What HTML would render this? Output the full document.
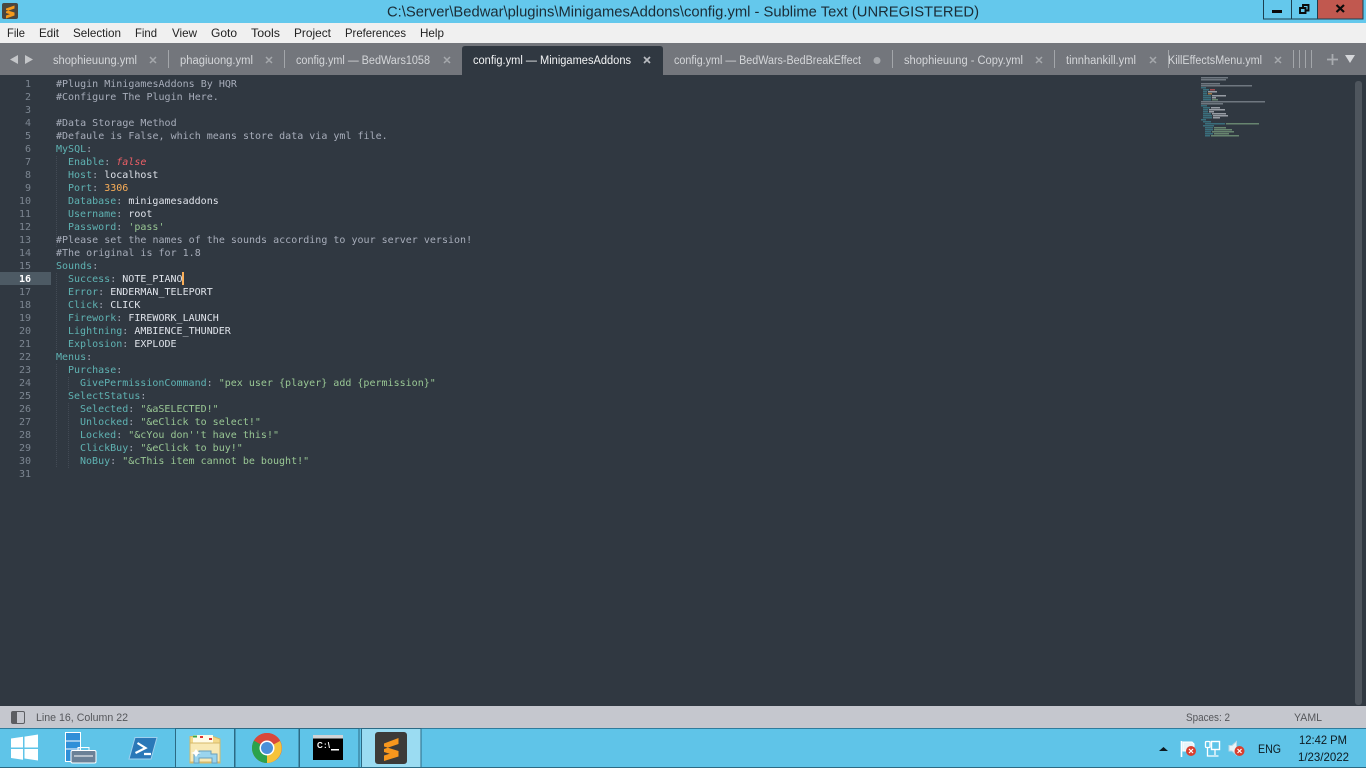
<!DOCTYPE html>
<html lang="en"><head><meta charset="utf-8"><title>config.yml - Sublime Text</title>
<style>
html,body{margin:0;padding:0;width:1366px;height:768px;overflow:hidden;background:#303841}
svg{display:block}
text{white-space:pre;font-family:"Liberation Sans",sans-serif}
.c text{font-family:"DejaVu Sans Mono","Liberation Mono",monospace;font-size:10px;letter-spacing:.01px;fill:#a7adba}
.n text{font-family:"DejaVu Sans Mono","Liberation Mono",monospace;font-size:10px;fill:#7c8691;text-anchor:end}
.k{fill:#5fb3b3}.p{fill:#a7adba}.v{fill:#dfe3ea}.s{fill:#99c794}.o{fill:#f9ae58}.f{fill:#ec5f66;font-style:italic}
.t text{font-size:11.5px;fill:#d4d6d9}
.m text{font-size:12px;fill:#222}
.x{stroke:#a6a9ad;stroke-width:1.5;fill:none}
.sp{stroke:#a3a6aa;stroke-width:1}
.b{fill:#6fcdee;stroke:#2c6a84;stroke-width:1}
.mm rect{height:1.5px}
</style></head><body>
<svg width="1366" height="768" viewBox="0 0 1366 768" xmlns="http://www.w3.org/2000/svg">
<rect width="1366" height="23" fill="#64c8ec"/>
<rect x="2" y="3" width="16" height="16" rx="2" fill="#4a4640"/>
<path d="M14.500 5.500 6 8.500v3l8.500-3zM6 10l8.500 2.500v3L6 13zM14.500 12.500v3L6 18.500v-3z" fill="#f59a1c"/>
<text x="387" y="16.500" font-size="15" fill="#1b2c36" textLength="592" lengthAdjust="spacingAndGlyphs">C:\Server\Bedwar\plugins\MinigamesAddons\config.yml - Sublime Text (UNREGISTERED)</text>

<rect x="1263.500" y="-1" width="99.500" height="20" fill="none" stroke="#1c3f50"/>
<line x1="1291.500" y1="0" x2="1291.500" y2="19" stroke="#1c3f50"/>
<rect x="1317.500" y="-1" width="45.500" height="20" fill="#c1584f" stroke="#1c3f50"/>
<rect x="1272" y="10" width="10" height="3" fill="#0b0b0b"/>
<path d="M1300 8h5.500v5H1300zM1303 8V5h5.500v5.500H1306" fill="none" stroke="#0b0b0b" stroke-width="1.900"/>
<path d="M1336.500 5l7.500 7M1344 5l-7.500 7" stroke="#0b0b0b" stroke-width="2.200"/>

<rect y="23" width="1366" height="20" fill="#f0f0f0"/>
<g class="m">
<text x="7" y="37" textLength="18" lengthAdjust="spacingAndGlyphs">File</text>
<text x="39" y="37" textLength="20" lengthAdjust="spacingAndGlyphs">Edit</text>
<text x="73" y="37" textLength="48" lengthAdjust="spacingAndGlyphs">Selection</text>
<text x="135" y="37" textLength="22" lengthAdjust="spacingAndGlyphs">Find</text>
<text x="172" y="37" textLength="25" lengthAdjust="spacingAndGlyphs">View</text>
<text x="211" y="37" textLength="26" lengthAdjust="spacingAndGlyphs">Goto</text>
<text x="251" y="37" textLength="29" lengthAdjust="spacingAndGlyphs">Tools</text>
<text x="294" y="37" textLength="37" lengthAdjust="spacingAndGlyphs">Project</text>
<text x="345" y="37" textLength="61" lengthAdjust="spacingAndGlyphs">Preferences</text>
<text x="420" y="37" textLength="24" lengthAdjust="spacingAndGlyphs">Help</text>
</g>

<rect y="43" width="1366" height="32" fill="#73767c"/>
<path d="M10 59.500 18 55v9zM33 59.500 25 55v9z" fill="#c4c6c9"/>
<path d="M462 75v-26q0-3 3-3h195q3 0 3 3v26z" fill="#303841"/>
<g class="t">
<text x="53" y="64" textLength="84" lengthAdjust="spacingAndGlyphs">shophieuung.yml</text>
<text x="180" y="64" textLength="73" lengthAdjust="spacingAndGlyphs">phagiuong.yml</text>
<text x="296" y="64" textLength="134" lengthAdjust="spacingAndGlyphs">config.yml — BedWars1058</text>
<text x="473" y="64" textLength="158" lengthAdjust="spacingAndGlyphs" style="fill:#f2f3f4">config.yml — MinigamesAddons</text>
<text x="674" y="64" textLength="187" lengthAdjust="spacingAndGlyphs">config.yml — BedWars-BedBreakEffect</text>
<text x="904" y="64" textLength="119" lengthAdjust="spacingAndGlyphs">shophieuung - Copy.yml</text>
<text x="1066" y="64" textLength="70" lengthAdjust="spacingAndGlyphs">tinnhankill.yml</text>
<text x="1168" y="64" textLength="94" lengthAdjust="spacingAndGlyphs">KillEffectsMenu.yml</text>
</g>
<path class="x" d="M150 57l6 6M156 57l-6 6M266 57l6 6M272 57l-6 6M444 57l6 6M450 57l-6 6M1036 57l6 6M1042 57l-6 6M1150 57l6 6M1156 57l-6 6M1275 57l6 6M1281 57l-6 6"/>
<path d="M644 57l6 6M650 57l-6 6" stroke="#b8bbc0" stroke-width="1.700" fill="none"/>
<circle cx="877" cy="60.500" r="3.500" fill="#a6a9ad"/>
<path class="sp" d="M168.500 50v18M284.500 50v18M892.500 50v18M1054.500 50v18M1168.500 50v18M1293.500 50v18M1299.500 50v18M1305.500 50v18M1311.500 50v18"/>
<path d="M1327 59.500h11M1332.500 54v11" stroke="#a9acb0" stroke-width="1.800" fill="none"/>
<path d="M1345 55h10l-5 8z" fill="#d5d7da"/>

<rect y="75" width="1366" height="631" fill="#303841"/>
<rect y="272" width="51" height="13" fill="#4d5a64"/>
<path d="M57 156v91M57 273v78M57 364v104M69 377v13M69 403v65" stroke="#434b55" stroke-width="1" stroke-dasharray="1 1" fill="none" transform="translate(-.500 0)"/>

<g class="n">
<text x="31" y="87">1</text><text x="31" y="100">2</text><text x="31" y="113">3</text><text x="31" y="126">4</text><text x="31" y="139">5</text><text x="31" y="152">6</text><text x="31" y="165">7</text><text x="31" y="178">8</text><text x="31" y="191">9</text><text x="31" y="204">10</text><text x="31" y="217">11</text><text x="31" y="230">12</text><text x="31" y="243">13</text><text x="31" y="256">14</text><text x="31" y="269">15</text><text x="31" y="282" style="fill:#fff;font-weight:bold">16</text><text x="31" y="295">17</text><text x="31" y="308">18</text><text x="31" y="321">19</text><text x="31" y="334">20</text><text x="31" y="347">21</text><text x="31" y="360">22</text><text x="31" y="373">23</text><text x="31" y="386">24</text><text x="31" y="399">25</text><text x="31" y="412">26</text><text x="31" y="425">27</text><text x="31" y="438">28</text><text x="31" y="451">29</text><text x="31" y="464">30</text><text x="31" y="477">31</text>
</g>

<g class="c">
<text x="56" y="87">#Plugin MinigamesAddons By HQR</text>
<text x="56" y="100">#Configure The Plugin Here.</text>
<text x="56" y="126">#Data Storage Method</text>
<text x="56" y="139">#Defaule is False, which means store data via yml file.</text>
<text x="56" y="152"><tspan class="k">MySQL</tspan><tspan class="p">:</tspan></text>
<text x="68" y="165"><tspan class="k">Enable</tspan><tspan class="p">: </tspan><tspan class="f">false</tspan></text>
<text x="68" y="178"><tspan class="k">Host</tspan><tspan class="p">: </tspan><tspan class="v">localhost</tspan></text>
<text x="68" y="191"><tspan class="k">Port</tspan><tspan class="p">: </tspan><tspan class="o">3306</tspan></text>
<text x="68" y="204"><tspan class="k">Database</tspan><tspan class="p">: </tspan><tspan class="v">minigamesaddons</tspan></text>
<text x="68" y="217"><tspan class="k">Username</tspan><tspan class="p">: </tspan><tspan class="v">root</tspan></text>
<text x="68" y="230"><tspan class="k">Password</tspan><tspan class="p">: </tspan><tspan class="s">'pass'</tspan></text>
<text x="56" y="243">#Please set the names of the sounds according to your server version!</text>
<text x="56" y="256">#The original is for 1.8</text>
<text x="56" y="269"><tspan class="k">Sounds</tspan><tspan class="p">:</tspan></text>
<text x="68" y="282"><tspan class="k">Success</tspan><tspan class="p">: </tspan><tspan class="v">NOTE_PIANO</tspan></text>
<text x="68" y="295"><tspan class="k">Error</tspan><tspan class="p">: </tspan><tspan class="v">ENDERMAN_TELEPORT</tspan></text>
<text x="68" y="308"><tspan class="k">Click</tspan><tspan class="p">: </tspan><tspan class="v">CLICK</tspan></text>
<text x="68" y="321"><tspan class="k">Firework</tspan><tspan class="p">: </tspan><tspan class="v">FIREWORK_LAUNCH</tspan></text>
<text x="68" y="334"><tspan class="k">Lightning</tspan><tspan class="p">: </tspan><tspan class="v">AMBIENCE_THUNDER</tspan></text>
<text x="68" y="347"><tspan class="k">Explosion</tspan><tspan class="p">: </tspan><tspan class="v">EXPLODE</tspan></text>
<text x="56" y="360"><tspan class="k">Menus</tspan><tspan class="p">:</tspan></text>
<text x="68" y="373"><tspan class="k">Purchase</tspan><tspan class="p">:</tspan></text>
<text x="80" y="386"><tspan class="k">GivePermissionCommand</tspan><tspan class="p">: </tspan><tspan class="s">"pex user {player} add {permission}"</tspan></text>
<text x="68" y="399"><tspan class="k">SelectStatus</tspan><tspan class="p">:</tspan></text>
<text x="80" y="412"><tspan class="k">Selected</tspan><tspan class="p">: </tspan><tspan class="s">"&amp;aSELECTED!"</tspan></text>
<text x="80" y="425"><tspan class="k">Unlocked</tspan><tspan class="p">: </tspan><tspan class="s">"&amp;eClick to select!"</tspan></text>
<text x="80" y="438"><tspan class="k">Locked</tspan><tspan class="p">: </tspan><tspan class="s">"&amp;cYou don''t have this!"</tspan></text>
<text x="80" y="451"><tspan class="k">ClickBuy</tspan><tspan class="p">: </tspan><tspan class="s">"&amp;eClick to buy!"</tspan></text>
<text x="80" y="464"><tspan class="k">NoBuy</tspan><tspan class="p">: </tspan><tspan class="s">"&amp;cThis item cannot be bought!"</tspan></text>
</g>
<rect x="182" y="272" width="2" height="13" fill="#f9ae58"/>

<g class="mm" opacity=".7">
<g fill="#8b929c">
<rect x="1201" y="77" width="27" height="1.500"/><rect x="1201" y="79" width="25" height="1.500"/><rect x="1201" y="83" width="19" height="1.500"/><rect x="1201" y="85" width="51" height="1.500"/>
<rect x="1201" y="101" width="64" height="1.500"/><rect x="1201" y="103" width="22" height="1.500"/>
</g>
<g fill="#3f8596">
<rect x="1201" y="87" width="5" height="1.500"/><rect x="1203" y="89" width="6" height="1.500"/><rect x="1203" y="91" width="4" height="1.500"/><rect x="1203" y="93" width="4" height="1.500"/><rect x="1203" y="95" width="8" height="1.500"/><rect x="1203" y="97" width="8" height="1.500"/><rect x="1203" y="99" width="8" height="1.500"/>
<rect x="1201" y="105" width="6" height="1.500"/><rect x="1203" y="107" width="7" height="1.500"/><rect x="1203" y="109" width="5" height="1.500"/><rect x="1203" y="111" width="5" height="1.500"/><rect x="1203" y="113" width="8" height="1.500"/><rect x="1203" y="115" width="9" height="1.500"/><rect x="1203" y="117" width="9" height="1.500"/>
<rect x="1201" y="119" width="5" height="1.500"/><rect x="1203" y="121" width="8" height="1.500"/><rect x="1205" y="123" width="20" height="1.500"/><rect x="1203" y="125" width="11" height="1.500"/><rect x="1205" y="127" width="8" height="1.500"/><rect x="1205" y="129" width="8" height="1.500"/><rect x="1205" y="131" width="6" height="1.500"/><rect x="1205" y="133" width="8" height="1.500"/><rect x="1205" y="135" width="5" height="1.500"/>
</g>
<rect x="1210" y="89" width="5" height="1.500" fill="#d0585c"/><rect x="1208" y="93" width="4" height="1.500" fill="#d4954c"/>
<g fill="#c3c7ce">
<rect x="1208" y="91" width="9" height="1.500"/><rect x="1212" y="95" width="14" height="1.500"/><rect x="1212" y="97" width="4" height="1.500"/>
<rect x="1211" y="107" width="9" height="1.500"/><rect x="1209" y="109" width="16" height="1.500"/><rect x="1209" y="111" width="5" height="1.500"/><rect x="1212" y="113" width="14" height="1.500"/><rect x="1213" y="115" width="15" height="1.500"/><rect x="1213" y="117" width="7" height="1.500"/>
</g>
<g fill="#7fa683">
<rect x="1212" y="99" width="6" height="1.500"/><rect x="1226" y="123" width="33" height="1.500"/><rect x="1214" y="127" width="12" height="1.500"/><rect x="1214" y="129" width="18" height="1.500"/><rect x="1212" y="131" width="22" height="1.500"/><rect x="1214" y="133" width="15" height="1.500"/><rect x="1211" y="135" width="28" height="1.500"/>
</g>
</g>

<rect x="1355" y="81" width="7" height="624" rx="3" fill="#4e555d"/>

<rect y="706" width="1366" height="22" fill="#c5c7ce"/>
<rect x="11.500" y="711.500" width="13" height="12" rx="1.500" fill="none" stroke="#5c5e62"/>
<rect x="12" y="712" width="5" height="11" fill="#5c5e62"/>
<text x="36" y="721" font-size="11" fill="#55575b" textLength="92" lengthAdjust="spacingAndGlyphs">Line 16, Column 22</text>
<text x="1186" y="721" font-size="11" fill="#55575b" textLength="44" lengthAdjust="spacingAndGlyphs">Spaces: 2</text>
<text x="1294" y="721" font-size="11" fill="#55575b" textLength="28" lengthAdjust="spacingAndGlyphs">YAML</text>

<rect y="728" width="1366" height="40" fill="#5fc4e8"/>
<line x1="0" y1="767.500" x2="1366" y2="767.500" stroke="#2c6a84"/>
<line x1="0" y1="728.500" x2="1366" y2="728.500" stroke="#2f7c9c"/>

<path d="M11 738.500 23 736.800v10.700H11zM24.500 736.600 38 734.500v13H24.500zM11 749h12v10.700L11 758zM24.500 749H38v11.500l-13.500-2z" fill="#fff"/>

<rect x="65.500" y="732.500" width="15" height="29" fill="#2f8fd8" stroke="#fff"/>
<path d="M66 741h14M66 749h14" stroke="#fff"/>
<rect x="71" y="750.500" width="25" height="12.500" rx="1.500" fill="#6b8197" stroke="#fff"/>
<path d="M78 751v-3.500h11v3.500M74 756h19" stroke="#fff" fill="none"/>

<path d="M135 737.500h22l-6 21.500h-22z" fill="#2a78b8" stroke="#9fd0ee"/>
<path d="M137.500 743l8 5-10 5M144 754h7" stroke="#fff" stroke-width="2.200" fill="none"/>

<rect x="235" y="728.500" width="64" height="39" fill="#5fc4e8" stroke="#2c6a84"/>
<rect x="299.500" y="728.500" width="59.500" height="39" fill="#5fc4e8" stroke="#2c6a84"/>
<rect x="175.500" y="728.500" width="59" height="39" class="b"/>
<rect x="361.500" y="728.500" width="59.500" height="39" fill="#9bdcf2" stroke="#2c6a84"/>

<path d="M190 739v-2.500h23l7 2.500v24h-30z" fill="#f3d98a" stroke="#d6b96a"/>
<rect x="193" y="735" width="20" height="8" fill="#fffbe6"/>
<rect x="193" y="735.500" width="4" height="2" fill="#3aa64a"/><rect x="200" y="736" width="3" height="2" fill="#d33"/><rect x="209" y="738" width="3" height="2" fill="#d33"/>
<path d="M190 743h30v19h-30z" fill="#f8e9b5" stroke="#d6b96a"/>
<path d="M194 763v-9h5v-3h12v3h6v9h-5v-5h-13v5z" fill="#9ad4ee" stroke="#6aa0bc"/>
<path d="M196 749l2 3 3 1-3 1-2 3-2-3-3-1 3-1z" fill="#fff"/>

<circle cx="267" cy="748" r="15" fill="#d9483b"/>
<path d="M267 748V763A15 15 0 0 1 254 755.500 15 15 0 0 1 254 740.500z" fill="#2ba24c"/>
<path d="M267 748 254 740.500A15 15 0 0 1 267 733 15 15 0 0 1 280 740.500z" fill="#d9483b"/>
<path d="M267 748 280 741A15 15 0 0 1 267 763z" fill="#f5c33b"/>
<circle cx="267" cy="748" r="7.500" fill="#fff"/><circle cx="267" cy="748" r="6" fill="#4a90d9"/>

<rect x="313" y="735" width="30" height="25" fill="#000"/>
<rect x="313" y="735" width="30" height="3.500" fill="#cfd3d6"/>
<text x="317" y="748" font-family="Liberation Mono,monospace" font-size="8" font-weight="bold" fill="#fff" textLength="13">C:\</text>
<rect x="331" y="749" width="8" height="1.500" fill="#fff"/>

<rect x="375" y="732" width="32" height="32" rx="3" fill="#3c3b39"/>
<path d="M398.500 738 384 743.500v5.500l14.500-5zM384 746.500l14.500 4.500v5.500L384 752zM398.500 751v5.500L384 761v-5.500z" fill="#f7971d"/>

<path d="M1159 751l4.500-4 4.500 4z" fill="#0d1a20"/>
<path d="M1181.500 741v16" stroke="#fff" stroke-width="1.600"/><path d="M1183 742h9l2 2v7h-11z" fill="#e7f4f9" stroke="#fff"/>
<circle cx="1191" cy="751" r="5" fill="#d8402f"/><path d="M1189 749l4 4M1193 749l-4 4" stroke="#fff" stroke-width="1.200"/>
<rect x="1211.500" y="741.500" width="8" height="8" fill="none" stroke="#fff" stroke-width="1.400"/>
<rect x="1205.500" y="741.500" width="4.500" height="6" rx="1" fill="none" stroke="#fff" stroke-width="1.300"/><path d="M1207.500 748v8h11M1215 750v5" stroke="#fff" stroke-width="1.300" fill="none"/>
<path d="M1229 745.500h3l4.500-4v13.500l-4.500-4h-3z" fill="#e7f4f9" stroke="#b8d8e4"/>
<circle cx="1239.500" cy="751" r="5" fill="#d8402f"/><path d="M1237.500 749l4 4M1241.500 749l-4 4" stroke="#fff" stroke-width="1.200"/>
<text x="1258" y="753" font-size="12" fill="#0d1a20" textLength="23" lengthAdjust="spacingAndGlyphs">ENG</text>
<text x="1299" y="744" font-size="12" fill="#0d1a20" textLength="48" lengthAdjust="spacingAndGlyphs">12:42 PM</text>
<text x="1298" y="761" font-size="12" fill="#0d1a20" textLength="51" lengthAdjust="spacingAndGlyphs">1/23/2022</text>
</svg>
</body></html>
